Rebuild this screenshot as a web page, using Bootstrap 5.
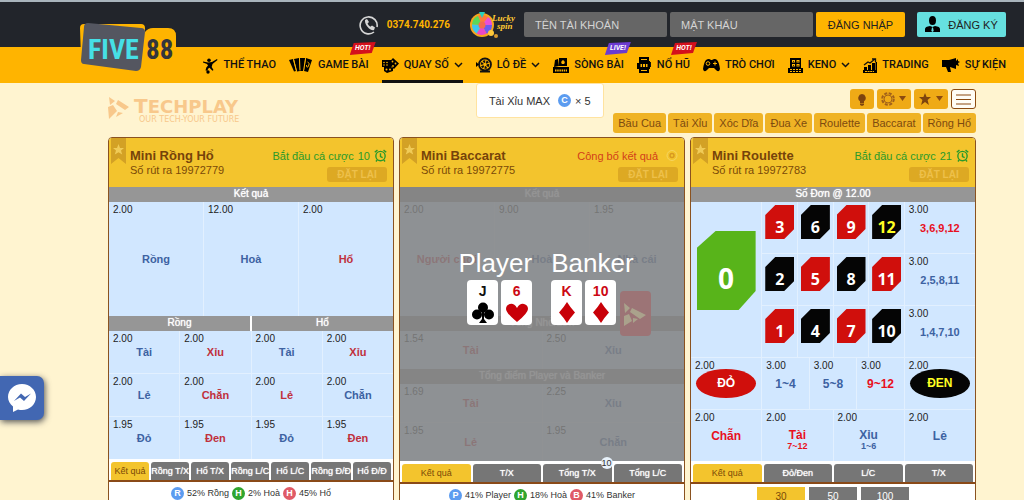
<!DOCTYPE html>
<html lang="vi">
<head>
<meta charset="utf-8">
<meta name="viewport" content="width=device-width, initial-scale=1">
<title>FIVE88 - Quay số</title>
<link href="https://cdn.jsdelivr.net/npm/bootstrap@5.3.0/dist/css/bootstrap.min.css" rel="stylesheet">
<style>
body{font-family:"Liberation Sans",Arial,sans-serif;font-size:11px;line-height:14px;background:#fff4d0;color:#333}
button{font:inherit;border:0;padding:0}
a{text-decoration:none;color:inherit}
.topbar{background:#22252b;border-top:2px solid #a9b4bc;height:47px;padding-right:18px}
.phone{color:#ffb400;font:700 10px/14px Roboto,sans-serif}
.login{gap:3px}
.field{width:143px;height:25px;background:#666;border:0;border-radius:2px;color:#eee;padding:0 11px;font-size:11px}
.field::placeholder{color:#d4d4d4}
.cta{height:25px;width:89px;border-radius:2px;background:#ffb400;color:#222}
.cta.join{background:#66e0df}
.mainnav{background:#ffb400;height:36px;padding-right:18px;gap:13px;font:500 11px/14px Roboto,sans-serif;color:#111}
.navi{height:36px;gap:5px;white-space:nowrap;border-bottom:3px solid transparent;padding-top:3px}
.navi.on{border-color:#111}
.flag{top:-5px;right:-7px;width:26px;height:13px;background:#d4101c;color:#fff;clip-path:polygon(4px 1px,100% 0,22px 11px,0 100%);font:italic 700 7px/12px Roboto,sans-serif;text-align:center}
.flag.live{background:#6c3bd0}
.brand{left:80px;top:19px}
.popup{top:36px;left:0;width:128px;height:35px;background:#fff;border:1px solid #ffe3a0;border-radius:3px;font:400 11px/14px "Liberation Sans",Arial,sans-serif;color:#333;z-index:5}
.dot{width:13px;height:13px;border-radius:50%;font-size:9px;line-height:13px;color:#fff;text-align:center;font-weight:700;flex:none}
.b{background:#5c9cf0}.g{background:#2fa52f}.r{background:#e05a66}
.page{padding:0 48px 0 108px}
.tools{height:54px;padding-top:6px}
.toolset{gap:3px}
.tool{height:20px;background:#efaa16;border-radius:3px;color:#8c4b10}
.tool.list{background:#fffdf5;border:1px solid #8c4b10}
.tagset{gap:2px}
.tag{height:20px;padding:0 5px;border-radius:3px;background:#efb325;color:#7d4a10;white-space:nowrap}
.boards{display:grid;grid-template-columns:repeat(3,minmax(0,1fr));gap:5px;min-width:868px}
.board{border:1px solid #8a5220;border-radius:4px;background:#fff;overflow:hidden;height:400px}
.bhead{background:#f3c42d;height:49px;padding:0 6px 0 2px;color:#7a4a08}
.bhead h2{font-size:13px;line-height:15px;font-weight:700;margin:10px 0 0;color:#76430a}
.status{color:#2a9a2a;margin-top:11px}
.status.end{color:#d2401a}
.again{width:60px;height:15px;background:#dda923;color:#eec04a;border-radius:3px;font-size:10px;line-height:15px;font-weight:700}
.bar{background:#969696;color:#fff;height:15px;line-height:14px;text-align:center;font-size:10px;text-shadow:0 0 1px #fff}
.odds{display:grid;gap:1px;background:#e2f0ff}
.bet{display:grid;background:#d1e7ff;grid-template:100%/100%;color:#3d62a2}
.bet>*{grid-area:1/1}
.odd{justify-self:start;font-size:10px;line-height:14px;padding:1px 0 0 4px;color:#222}
.pick{place-self:center;font-weight:700;font-size:11px;line-height:14px;text-align:center}
.hot{color:#c0303c}.red{color:#e8101e}
.c3{grid-template-columns:repeat(3,1fr);grid-auto-rows:114px}
.c4{grid-template-columns:repeat(4,1fr);grid-auto-rows:42px}
.c2{grid-template-columns:repeat(2,1fr);grid-auto-rows:38px}
.tabs{display:flex;gap:2px;padding:3px 2px 0;height:23px;border-bottom:2px solid #8a4a18}
.tabs button{flex:1 1 0;background:#767676;color:#fff;border-radius:3px 3px 0 0;font-size:9px;white-space:nowrap;text-shadow:0 0 1px #fff}
.tabs button.on{background:#f3c42d;color:#7a4a08;text-shadow:none}
.legend-row{height:20px;padding-top:2px;font-size:9px;gap:3px}
.veil{inset:0;background:rgba(130,130,130,.86);color:#fff;padding:60px 0 0 8px;gap:19px}
.hand{font-size:26px;line-height:33px}
.dealt{gap:3px}
.pcard{width:31px;height:45px;border-radius:4px;background:#fff;color:#111;text-align:center;font:700 14px/22px "Liberation Sans",Arial,sans-serif}
.pcard.d{color:#cc0814}
.chipmark{left:220px;top:104px}
.wheel{grid-template-columns:repeat(24,minmax(0,1fr));grid-auto-rows:51px}
.tile{width:29px;height:34px;background:#050505;color:#fff;clip-path:polygon(10px 0,100% 0,100% 24px,19px 100%,0 100%,0 10px);font:700 16px/20px "Open Sans",sans-serif;place-self:start;margin:3px 0 0 3px;padding-top:12px}
.tile.rd,.oval.rd{background:#d00f0c}
.tile.yl,.oval.yl{color:#ff2}
.tile.zero{width:59px;height:79px;background:#58b41a;clip-path:polygon(19px 0,100% 0,100% 60px,42px 100%,0 100%,0 17px);font-size:28px;line-height:34px;padding-top:30px;place-self:start center;margin:29px 0 0}
.oval{width:60px;height:29px;border-radius:50%;background:#050505;color:#fff;place-self:center;font-weight:700;font-size:12px;line-height:29px}
.s3{grid-column:span 3}.s4{grid-column:span 4}.s6{grid-column:span 6}
.num{font-size:12px}
.bet small{display:block;font-size:9px;line-height:9px}
.count{width:12px;height:12px;right:-1px;top:-7px;background:#e8f2fb;color:#333;border-radius:50%;font-size:9px;line-height:12px;text-shadow:none;z-index:2}
.amounts{gap:4px;padding-top:3px}
.amount{width:48px;height:20px;background:#767676;color:#fff;font-size:10px;line-height:18px}
.amount.on{background:#f3c42d;color:#7a4a08}
.chat{left:0;top:376px;width:44px;height:44px;background:#4267b2;border-radius:0 7px 7px 0;box-shadow:1px 2px 6px #555}
</style>
</head>
<body class="vh-100 overflow-hidden">
<svg width="0" height="0" class="position-absolute" aria-hidden="true">
<symbol id="down" viewBox="0 0 9 6"><path d="M1 1l3.500 3.500L8 1" fill="none" stroke="#111" stroke-width="1.500"/></symbol>
<symbol id="mark" viewBox="0 0 15 26"><path d="M0 0h15v26l-7.500-6L0 26z" fill="#d3a125"/><path d="M7.500 6l1.500 4h4l-3 2.500 1.200 4-3.700-2.300-3.700 2.300 1.200-4-3-2.500h4z" fill="#f0cb57"/></symbol>
<symbol id="clock" viewBox="0 0 12 12"><g fill="none" stroke="#2a9a2a" stroke-width="1.300"><circle cx="6" cy="6.500" r="4.300"/><path d="M6 4v3l2 1M.7 3l2.500-2M11.300 3L8.800 1M3 10l-1.200 1.500M9 10l1.200 1.500"/></g></symbol>
</svg>

<header class="position-relative">
<div class="topbar d-flex align-items-center justify-content-end">
  <svg width="20" height="20" viewBox="0 0 20 20" class="me-1" aria-hidden="true"><path d="M15 17A8.500 8.500 0 1 1 18 12" fill="none" stroke="#d6d6d6" stroke-width="1.600"/><path d="M6 5l2-1 2 3-1.500 1.500q.8 2 2.800 3.200L13 10.500l3 2-1 2.500q-2 1-5-1.500Q5.500 9.500 6 5z" fill="#d6d6d6"/></svg>
  <a href="#" class="phone ms-1 me-3">0374.740.276</a>
  <svg width="46" height="28" viewBox="0 0 46 28" class="ms-1 me-2" role="img" aria-label="Lucky spin"><circle cx="12" cy="14" r="12" fill="#f6a51c"/><g stroke-width="10" fill="none"><circle cx="12" cy="14" r="5" stroke="#6a5cf0" stroke-dasharray="5.240 26.180"/><circle cx="12" cy="14" r="5" stroke="#e948c8" stroke-dasharray="5.240 26.180" stroke-dashoffset="-5.240"/><circle cx="12" cy="14" r="5" stroke="#3cc7ef" stroke-dasharray="5.240 26.180" stroke-dashoffset="-10.470"/><circle cx="12" cy="14" r="5" stroke="#58d85a" stroke-dasharray="5.240 26.180" stroke-dashoffset="-15.700"/><circle cx="12" cy="14" r="5" stroke="#ff7a3c" stroke-dasharray="5.240 26.180" stroke-dashoffset="-20.940"/><circle cx="12" cy="14" r="5" stroke="#e84fd8" stroke-dasharray="5.240 26.180" stroke-dashoffset="-26.180"/></g><circle cx="12" cy="14" r="3.500" fill="#f36a50"/><path d="M9 1h6l-3 6z" fill="#28d0c0"/><circle cx="21" cy="22" r="3" fill="#ffc93a"/><circle cx="26" cy="25" r="2" fill="#d89a30"/><g fill="#ffc933" font-family="Liberation Serif,serif" font-style="italic" font-weight="700" font-size="9"><text x="22" y="10">Lucky</text><text x="27" y="18">spin</text></g></svg>
  <div class="login d-flex">
  <input class="field" type="text" placeholder="TÊN TÀI KHOẢN" aria-label="Tên tài khoản">
  <input class="field" type="password" placeholder="MẬT KHẨU" aria-label="Mật khẩu">
  <button class="cta me-2">ĐĂNG NHẬP</button>
  </div>
  <button class="cta join ms-1 d-flex align-items-center justify-content-center gap-2"><svg width="15" height="17" viewBox="0 0 15 17" aria-hidden="true"><ellipse cx="7.500" cy="4.500" rx="3.500" ry="4.500"/><path d="M0 16v-3q0-2.500 5-3l2.500 1L10 10q5 .5 5 3v3z"/><path d="M7 11.500h1l.7 3.500-1.200 1-1.200-1z" fill="#66e0df"/></svg>ĐĂNG KÝ</button>
</div>
<nav class="mainnav d-flex justify-content-end">
  <a href="#" class="navi d-flex align-items-center"><svg width="16" height="17" viewBox="0 0 16 17"><circle cx="7" cy="3.300" r="1.800"/><path d="M1 4.500l5 1 4-.5 5-3 .5 1-5 4-.8 3 1.800 3-1 .7-3-3-1.500 1-.5 2-2-.2.800-3 1.700-2L5 7 1 5.500z"/><circle cx="6" cy="15" r="1.700"/></svg>THỂ THAO</a>
  <a href="#" class="navi d-flex align-items-center position-relative"><svg width="24" height="16" viewBox="0 0 24 16"><path d="M0 3l4-1 3 12-2 .5z"/><path d="M5 2l5-1 1 13-3 .5z"/><path d="M11 1h5l-1 13h-4z"/><path d="M17 1l6 2-4 12-4-1z"/><g fill="none" stroke="#ffb400"><path d="M4.500 2.500L7.500 14M10.500 1.500l.5 12M16.500 2l-2 12"/><path d="M18.500 5q3 1 1 4t-2-1"/></g></svg>GAME BÀI<span class="flag position-absolute">HOT!</span></a>
  <a href="#" class="navi on d-flex align-items-center"><svg width="17" height="15" viewBox="0 0 17 15"><path d="M0 2h9v7H0zM11 0l6 5.500-5 5.500-6-5.500z"/><path d="M2 9l5-1 4 2v3l-6 2-3-2z"/><g fill="#ffb400"><circle cx="2" cy="4.500" r=".8"/><circle cx="5" cy="4.500" r=".8"/><circle cx="2" cy="7" r=".8"/><circle cx="5" cy="7" r=".8"/><circle cx="10.500" cy="3.500" r=".9"/><circle cx="13.500" cy="5.500" r=".9"/><circle cx="11" cy="8" r=".9"/><circle cx="4.500" cy="11.500" r="1"/><circle cx="8" cy="11.500" r="1"/></g></svg>QUAY SỐ<svg width="9" height="6"><use href="#down"/></svg></a>
  <div class="position-relative"><a href="#" class="navi d-flex align-items-center"><svg width="16" height="16" viewBox="0 0 16 16"><g fill="none" stroke="#111"><circle cx="9" cy="7.500" r="6" stroke-width="1.800"/><circle cx="9" cy="7.500" r="3" stroke-width="2.600" stroke-dasharray="2 1"/><path d="M4 14.500h10" stroke-width="2"/></g><path d="M0 5l3 2.500L0 10z"/></svg>LÔ ĐỀ<svg width="9" height="6"><use href="#down"/></svg></a>
    <div class="popup position-absolute d-flex align-items-center justify-content-center gap-1">Tài Xỉu MAX <span class="dot b ms-1">C</span>× 5</div></div>
  <a href="#" class="navi d-flex align-items-center position-relative"><svg width="16" height="15" viewBox="0 0 16 15"><path d="M1 9l1-7 3-1 1 7zM6 0h8v8H6zM0 9h16v6H0z"/><path d="M10 2q3 2 1 4H9Q7 4 10 2z" fill="#ffb400"/><path d="M2 12.500h12" stroke="#ffb400" stroke-width="2" stroke-dasharray="1.500 .7"/></svg>SÒNG BÀI<span class="flag live position-absolute">LIVE!</span></a>
  <a href="#" class="navi d-flex align-items-center position-relative"><svg width="15" height="16" viewBox="0 0 15 16"><path d="M2 0h10v4h1v8h-1v4H2v-4H0V6h2z"/><path d="M13.500 5v5" stroke="#111"/><path d="M3.500 7h7v3h-7zM4 2h6v1H4zM4 13h6v1H4z" fill="#ffb400"/><path d="M5.500 7v3M8.500 7v3" stroke="#111"/></svg>NỔ HŨ<span class="flag position-absolute">HOT!</span></a>
  <a href="#" class="navi d-flex align-items-center"><svg width="17" height="15" viewBox="0 0 17 15"><path d="M3 2q3-2 5 0h1q3-2 5 0 2 2 3 9-1 4-4 1l-2-2H6l-2 2q-3 3-4-1 1-7 3-9z"/><g fill="none" stroke="#ffb400"><circle cx="5" cy="5.500" r="1.800"/><path d="M12 3.500v4M10 5.500h4"/></g></svg>TRÒ CHƠI</a>
  <a href="#" class="navi d-flex align-items-center"><svg width="15" height="15" viewBox="0 0 15 15"><path d="M2 0h11v10h2v5H0v-5h2z"/><g fill="#ffb400"><path d="M4 2h3v2.500H4zM8.500 2h3v2.500h-3zM4 6h3v2.500H4zM8.500 6h3v2.500h-3z"/><path d="M2 11h2v1H2zM5 11h2v1H5zM8 11h2v1H8zM11 11h2v1h-2zM2 13h2v1H2zM5 13h2v1H5zM8 13h2v1H8zM11 13h2v1h-2z"/></g><path d="M5 3h1v.7H5zM9.500 3h1v.7h-1zM5 7h1v.7H5zM9.500 7h1v.7h-1z"/></svg>KENO<svg width="9" height="6"><use href="#down"/></svg></a>
  <a href="#" class="navi d-flex align-items-center"><svg width="14" height="15" viewBox="0 0 14 15"><path d="M1 9h3v3H1zM5 7h3v5H5zM9 5h3v7H9zM0 12h14v3H0zM12.500 4H14v8h-1.500z"/><path d="M1 7l4-3 2 1 5-4M9 1h3.500v3" fill="none" stroke="#111" stroke-width="1.300"/><path d="M2 13.500h9" stroke="#ffb400" stroke-dasharray="2 .6"/></svg>TRADING</a>
  <a href="#" class="navi d-flex align-items-center"><svg width="18" height="15" viewBox="0 0 18 15"><path d="M0 2h7l7-2v11L8 9l1 5H6L4 9H0zM14 3l2-2v2l2 1-2 1 1 3-3-1z"/></svg>SỰ KIỆN</a>
</nav>
<a href="#" class="brand position-absolute" aria-label="FIVE88"><svg width="100" height="54" viewBox="0 0 100 54"><path d="M4 5h57q4 0 4 4v4q3-4 8-4h15q8 0 8 8v18q0 9-8 9H62l-8 3L4 43q-3 0-3-4L0 9q0-4 4-4z" fill="#ffb400"/><path d="M8 4l53 5q4 0 4 4l-4 35q-1 4-5 4L4 45q-3 0-3-4L4 8q0-4 4-4z" fill="#545660"/><g font-family="'Roboto Condensed','Liberation Sans Narrow',sans-serif" font-weight="700"><text x="8" y="40" font-size="28" fill="#46dfe6">FIVE</text><text x="66" y="40" font-size="27" fill="#33363c">88</text></g></svg></a>
</header>

<main class="page">
<div class="tools d-flex justify-content-between">
  <svg width="148" height="34" viewBox="0 0 148 34" role="img" aria-label="Techplay"><g fill="#f8c88b"><path d="M1 8l6 4-5 4zM10 11l11 7-4 3-9-6zM0 18l5-2 4 6-8 8zM10 23l5 1-7 4z"/><g font-family="'DejaVu Sans',sans-serif"><text x="26" y="24" font-size="20" font-weight="700">T<tspan font-size="18">ECHPLAY</tspan></text><text x="31" y="33" font-size="8">OUR TECH-YOUR FUTURE</text></g></g></svg>
  <div class="d-flex flex-column align-items-end gap-1 me-n1">
    <div class="toolset d-flex">
      <button class="tool px-2" aria-label="Gợi ý"><svg width="8" height="12" viewBox="0 0 8 12" fill="#7d430f"><path d="M4 0a4 4 0 0 1 2 7.300V9H2V7.300A4 4 0 0 1 4 0zM2 9.500h4V11L4 12l-2-1z"/></svg></button>
      <button class="tool d-flex align-items-center gap-1 px-1" aria-label="Chip"><svg width="14" height="14" viewBox="0 0 14 14" fill="none" stroke="#a0601a"><circle cx="7" cy="7" r="4"/><circle cx="7" cy="7" r="5.800" stroke-width="2" stroke-dasharray="3 1.560"/></svg><svg width="8" height="6"><path d="M0 0h7L3.500 5z" fill="#8c4b10"/></svg></button>
      <button class="tool d-flex align-items-center gap-1 px-1" aria-label="Yêu thích"><svg width="14" height="12" viewBox="0 0 14 12"><path d="M7 0l1.600 4H13l-3.400 3 1.300 5L7 9l-3.900 3 1.300-5L1 4h4.400z" fill="#7d430f"/></svg><svg width="8" height="6"><path d="M0 0h7L3.500 5z" fill="#8c4b10"/></svg></button>
      <button class="tool list px-1" aria-label="Danh sách"><svg width="15" height="13" viewBox="0 0 15 13"><path d="M0 2h15M0 6.500h15M0 11h15" stroke="#8c4b10" stroke-width="1.200"/></svg></button>
    </div>
    <div class="tagset d-flex">
      <button class="tag">Bầu Cua</button><button class="tag">Tài Xỉu</button><button class="tag">Xóc Dĩa</button><button class="tag">Đua Xe</button><button class="tag">Roulette</button><button class="tag">Baccarat</button><button class="tag">Rồng Hổ</button>
    </div>
  </div>
</div>

<div class="boards">
<section class="board">
  <div class="bhead d-flex justify-content-between"><div class="d-flex"><svg width="15" height="26" class="me-1"><use href="#mark"/></svg><div><h2>Mini Rồng Hổ</h2>Số rút ra 19972779</div></div>
    <div class="d-flex flex-column align-items-end"><div class="status d-flex gap-1">Bắt đầu cá cược <span>10</span><svg width="13" height="13"><use href="#clock"/></svg></div><button class="again mt-1" disabled>ĐẶT LẠI</button></div></div>
  <div class="bar">Kết quả</div>
  <div class="odds c3">
    <button class="bet"><span class="odd">2.00</span><span class="pick">Rồng</span></button><button class="bet"><span class="odd">12.00</span><span class="pick">Hoà</span></button><button class="bet"><span class="odd">2.00</span><span class="pick hot">Hổ</span></button>
  </div>
  <div class="d-flex"><div class="bar w-50 border-end border-white">Rồng</div><div class="bar w-50 border-start border-white">Hổ</div></div>
  <div class="odds c4">
    <button class="bet"><span class="odd">2.00</span><span class="pick">Tài</span></button><button class="bet"><span class="odd">2.00</span><span class="pick hot">Xỉu</span></button><button class="bet"><span class="odd">2.00</span><span class="pick">Tài</span></button><button class="bet"><span class="odd">2.00</span><span class="pick hot">Xỉu</span></button>
    <button class="bet"><span class="odd">2.00</span><span class="pick">Lẻ</span></button><button class="bet"><span class="odd">2.00</span><span class="pick hot">Chẵn</span></button><button class="bet"><span class="odd">2.00</span><span class="pick hot">Lẻ</span></button><button class="bet"><span class="odd">2.00</span><span class="pick">Chẵn</span></button>
    <button class="bet"><span class="odd">1.95</span><span class="pick">Đỏ</span></button><button class="bet"><span class="odd">1.95</span><span class="pick hot">Đen</span></button><button class="bet"><span class="odd">1.95</span><span class="pick">Đỏ</span></button><button class="bet"><span class="odd">1.95</span><span class="pick hot">Đen</span></button>
  </div>
  <div class="tabs"><button class="on">Kết quả</button><button>Rồng T/X</button><button>Hổ T/X</button><button>Rồng L/C</button><button>Hổ L/C</button><button>Rồng Đ/Đ</button><button>Hổ Đ/Đ</button></div>
  <div class="legend-row d-flex justify-content-center align-items-center"><span class="dot b">R</span>52% Rồng <span class="dot g">H</span>2% Hoà <span class="dot r">H</span>45% Hổ</div>
</section>

<section class="board">
  <div class="bhead d-flex justify-content-between"><div class="d-flex"><svg width="15" height="26" class="me-1"><use href="#mark"/></svg><div><h2>Mini Baccarat</h2>Số rút ra 19972775</div></div>
    <div class="d-flex flex-column align-items-end"><div class="status end d-flex gap-2">Công bố kết quả <svg width="12" height="13" viewBox="0 0 12 13" fill="none"><circle cx="6" cy="6.500" r="5" stroke="#f5d460"/><circle cx="6" cy="6.500" r="2" stroke="#d99a20" stroke-width="1.500"/></svg></div><button class="again mt-1" disabled>ĐẶT LẠI</button></div></div>
  <div class="position-relative">
    <div class="bar">Kết quả</div>
    <div class="odds c3">
      <button class="bet"><span class="odd">2.00</span><span class="pick hot">Người chơi</span></button><button class="bet"><span class="odd">9.00</span><span class="pick">Hoà</span></button><button class="bet"><span class="odd">1.95</span><span class="pick">Nhà cái</span></button>
    </div>
    <div class="bar">Tổng Nhỏ/Lớn</div>
    <div class="odds c2"><button class="bet"><span class="odd">1.54</span><span class="pick hot">Tài</span></button><button class="bet"><span class="odd">2.50</span><span class="pick">Xỉu</span></button></div>
    <div class="bar">Tổng điểm Player và Banker</div>
    <div class="odds c2"><button class="bet"><span class="odd">1.69</span><span class="pick hot">Tài</span></button><button class="bet"><span class="odd">2.25</span><span class="pick">Xỉu</span></button><button class="bet"><span class="odd">1.95</span><span class="pick hot">Lẻ</span></button><button class="bet"><span class="odd">1.95</span><span class="pick">Chẵn</span></button></div>
    <div class="veil position-absolute d-flex justify-content-center align-items-start">
      <svg class="chipmark position-absolute" width="31" height="45" viewBox="0 0 31 45"><rect width="31" height="45" rx="4" fill="#9c7476"/><path d="M4 12l6 5-5 5zM12 17l14 7-6 4-10-7zM4 25l5-2 3 7-8 5zM13 27l5 1-5 4z" fill="#aaa28c"/></svg>
      <div class="position-relative"><div class="hand">Player</div><div class="dealt d-flex justify-content-end">
        <div class="pcard">J<svg class="d-block mx-auto" width="22" height="22" viewBox="0 0 22 22"><circle cx="11" cy="5.500" r="5"/><circle cx="5" cy="12.500" r="5"/><circle cx="17" cy="12.500" r="5"/><path d="M10 8h2v9l3 4H7l3-4z"/></svg></div>
        <div class="pcard d">6<svg class="d-block mx-auto" width="22" height="22" viewBox="0 0 22 22"><path d="M11 20Q0 11 0 7t4-5 7 4q3-5 7-4t4 5-11 13z" fill="#c80008"/></svg></div></div></div>
      <div class="position-relative"><div class="hand">Banker</div><div class="dealt d-flex justify-content-start">
        <div class="pcard d">K<svg class="d-block mx-auto" width="22" height="22" viewBox="0 0 22 22"><path d="M11 0q3 5 8 10.500-5 5.500-8 10.500-3-5-8-10.500 5-5.500 8-10.500z" fill="#c80008"/></svg></div>
        <div class="pcard d">10<svg class="d-block mx-auto" width="22" height="22" viewBox="0 0 22 22"><path d="M11 0q3 5 8 10.500-5 5.500-8 10.500-3-5-8-10.500 5-5.500 8-10.500z" fill="#c80008"/></svg></div></div></div>
    </div>
  </div>
  <div class="tabs"><button class="on">Kết quả</button><button>T/X</button><button class="position-relative">Tổng T/X<span class="count position-absolute">10</span></button><button>Tổng L/C</button></div>
  <div class="legend-row d-flex justify-content-center align-items-center"><span class="dot b">P</span>41% Player <span class="dot g">H</span>18% Hoà <span class="dot r">B</span>41% Banker</div>
</section>

<section class="board">
  <div class="bhead d-flex justify-content-between"><div class="d-flex"><svg width="15" height="26" class="me-1"><use href="#mark"/></svg><div><h2>Mini Roulette</h2>Số rút ra 19972783</div></div>
    <div class="d-flex flex-column align-items-end"><div class="status d-flex gap-1">Bắt đầu cá cược <span>21</span><svg width="13" height="13"><use href="#clock"/></svg></div><button class="again mt-1" disabled>ĐẶT LẠI</button></div></div>
  <div class="bar">Số Đơn @ 12.00</div>
  <div class="odds wheel">
    <button class="bet s6" style="grid-row:span 3"><span class="tile zero">0</span></button>
    <button class="bet s3"><span class="tile rd">3</span></button><button class="bet s3"><span class="tile">6</span></button><button class="bet s3"><span class="tile rd">9</span></button><button class="bet s3"><span class="tile yl">12</span></button>
    <button class="bet s6"><span class="odd">3.00</span><span class="pick red">3,6,9,12</span></button>
    <button class="bet s3"><span class="tile">2</span></button><button class="bet s3"><span class="tile rd">5</span></button><button class="bet s3"><span class="tile">8</span></button><button class="bet s3"><span class="tile rd">11</span></button>
    <button class="bet s6"><span class="odd">3.00</span><span class="pick">2,5,8,11</span></button>
    <button class="bet s3"><span class="tile rd">1</span></button><button class="bet s3"><span class="tile">4</span></button><button class="bet s3"><span class="tile rd">7</span></button><button class="bet s3"><span class="tile">10</span></button>
    <button class="bet s6"><span class="odd">3.00</span><span class="pick">1,4,7,10</span></button>
    <button class="bet s6"><span class="odd">2.00</span><span class="oval rd">ĐỎ</span></button><button class="bet s4"><span class="odd">3.00</span><span class="pick num">1~4</span></button><button class="bet s4"><span class="odd">3.00</span><span class="pick num">5~8</span></button><button class="bet s4"><span class="odd">3.00</span><span class="pick num red">9~12</span></button><button class="bet s6"><span class="odd">2.00</span><span class="oval yl">ĐEN</span></button>
    <button class="bet s6"><span class="odd">2.00</span><span class="pick num red">Chẵn</span></button><button class="bet s6"><span class="odd">2.00</span><span class="pick num red pt-2">Tài<small>7~12</small></span></button><button class="bet s6"><span class="odd">2.00</span><span class="pick num pt-2">Xỉu<small>1~6</small></span></button><button class="bet s6"><span class="odd">2.00</span><span class="pick num">Lẻ</span></button>
  </div>
  <div class="tabs"><button class="on">Kết quả</button><button>Đỏ/Đen</button><button>L/C</button><button>T/X</button></div>
  <div class="amounts d-flex justify-content-center"><button class="amount on">30</button><button class="amount">50</button><button class="amount">100</button></div>
</section>
</div>
</main>

<button class="chat position-fixed" aria-label="Messenger"><svg width="28" height="28" viewBox="0 0 28 28"><path d="M14 0C6 0 0 6 0 13c0 4 2 7 5 9.500V28l5-2.500q2 .5 4 .5c8 0 14-6 14-13S22 0 14 0z" fill="#fff"/><path d="M6 17l7-7.500 4 3.500 6-3.500-7 7.500-4-3.500z" fill="#4267b2"/></svg></button>
<script src="https://cdn.jsdelivr.net/npm/bootstrap@5.3.0/dist/js/bootstrap.bundle.min.js"></script>
</body>
</html>
